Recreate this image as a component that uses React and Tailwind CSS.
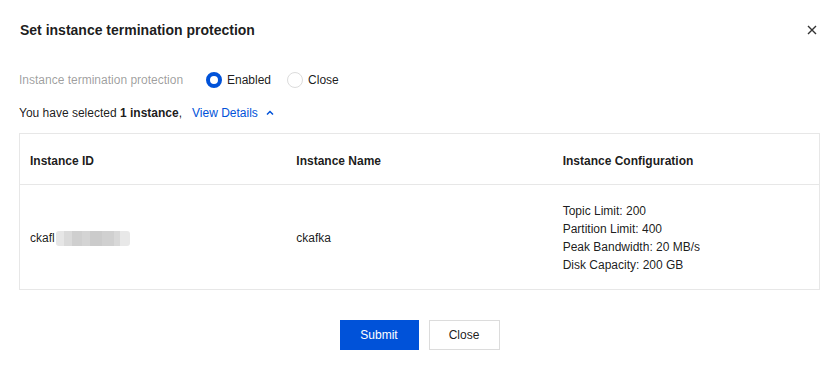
export default function App() {
  const font = { fontFamily: '"Liberation Sans", Arial, sans-serif' };
  return (
    <div className="w-[839px] h-[367px] bg-white relative overflow-hidden text-[12px] text-[#000000e6]" style={font}>
      <div className="flex items-center justify-between pl-[20px] pr-[20px] pt-[19px] h-[41px]">
        <div className="text-[14px] font-bold text-[#000000e6] leading-[22px]">Set instance termination protection</div>
        <svg width="12" height="12" viewBox="0 0 12 12" className="mr-[1px]">
          <path d="M2 2 L10 10 M10 2 L2 10" stroke="#333" strokeWidth="1.4" />
        </svg>
      </div>
      <div className="flex items-center pl-[19px] mt-[28px] h-[22px]">
        <span className="text-[#00000066] w-[187px]">Instance termination protection</span>
        <label className="flex items-center gap-[5px]">
          <span className="w-[16px] h-[16px] rounded-full border-[4px] border-[#0052d9] bg-white box-border" />
          <span>Enabled</span>
        </label>
        <label className="flex items-center gap-[5px] ml-[16px]">
          <span className="w-[16px] h-[16px] rounded-full border border-[#dcdcdc] bg-white box-border" />
          <span>Close</span>
        </label>
      </div>
      <div className="flex items-center pl-[19px] mt-[12px] h-[20px]">
        <span>You have selected <b>1 instance</b>,</span>
        <span className="text-[#0052d9] ml-[10px]">View Details</span>
        <svg width="10" height="10" viewBox="0 0 10 10" className="ml-[7px]">
          <path d="M2 6.5 L5 3.5 L8 6.5" stroke="#0052d9" strokeWidth="1.5" fill="none" />
        </svg>
      </div>
      <div className="mx-[19px] mt-[10px] border border-[#e7e7e7]">
        <div className="grid grid-cols-3 h-[51px] items-center pt-[3px] border-b border-[#e7e7e7] font-bold text-[#000000e6]">
          <div className="pl-[10px]">Instance ID</div>
          <div className="pl-[10px]">Instance Name</div>
          <div className="pl-[10px]">Instance Configuration</div>
        </div>
        <div className="grid grid-cols-3 h-[104px] items-center pt-[2px]">
          <div className="pl-[10px] flex items-center">
            <span>ckafl</span>
            <span className="flex h-[15px] ml-[1px]">
              <span className="w-[8px] bg-[#e6e6e6] rounded-l-[3px]" />
              <span className="w-[8px] bg-[#dadada]" />
              <span className="w-[10px] bg-[#cfcfcf]" />
              <span className="w-[8px] bg-[#d4d4d4]" />
              <span className="w-[12px] bg-[#cbcbcb]" />
              <span className="w-[12px] bg-[#d0d0d0]" />
              <span className="w-[6px] bg-[#d8d8d8]" />
              <span className="w-[10px] bg-[#e8e8e8] rounded-r-[3px]" />
            </span>
          </div>
          <div className="pl-[10px]">ckafka</div>
          <div className="pl-[10px] leading-[18px]">
            <div>Topic Limit: 200</div>
            <div>Partition Limit: 400</div>
            <div>Peak Bandwidth: 20 MB/s</div>
            <div>Disk Capacity: 200 GB</div>
          </div>
        </div>
      </div>
      <div className="flex justify-center gap-[10px] mt-[30px]">
        <button className="w-[79px] h-[30px] bg-[#0052d9] text-white text-[12px]">Submit</button>
        <button className="w-[71px] h-[30px] border border-[#dcdcdc] bg-white text-[12px] text-[#000000e6]">Close</button>
      </div>
    </div>
  );
}
